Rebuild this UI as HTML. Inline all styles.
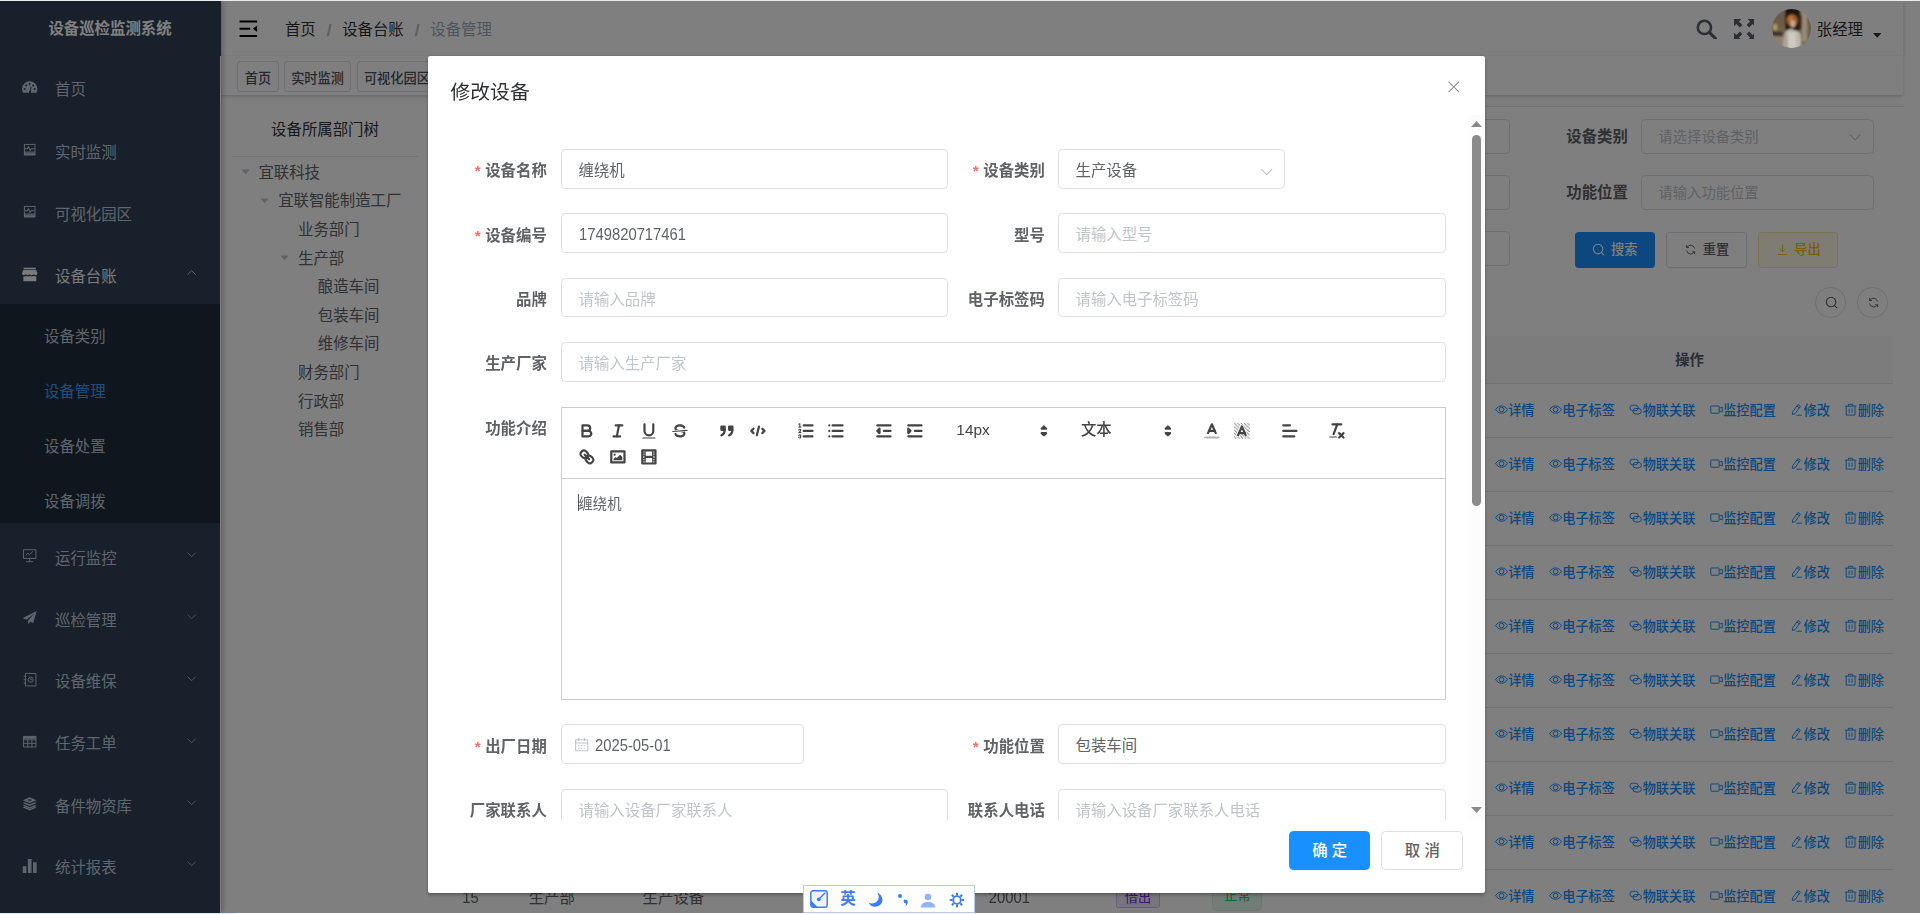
<!DOCTYPE html>
<html lang="zh-CN"><head><meta charset="utf-8"><title>设备巡检监测系统</title>
<style>
*{box-sizing:border-box}
html,body{margin:0;padding:0}
body{width:1920px;height:914px;overflow:hidden;position:relative;background:#ededeb;
 font-family:"Liberation Sans","Noto Sans CJK SC",sans-serif;font-size:14px;color:#606266;
 -webkit-font-smoothing:antialiased}
#vp{position:absolute;left:0;top:1px;width:1920px;height:912px;overflow:hidden;background:#fff}
.botline{position:absolute;left:0;top:913px;width:1920px;height:1px;background:#fff}
.botline:before{content:"";position:absolute;left:0;top:0;width:236px;height:1px;background:#d9f0f8}
#z{zoom:1.1;z-index:0;position:absolute;left:0;top:0;width:1745.46px;height:829.1px;overflow:hidden}
#app{position:absolute;left:0;top:0;width:1730px;height:829.1px;background:#fff}
.v-modal{position:absolute;left:0;top:0;width:100%;height:100%;background:#000;opacity:.5;z-index:10}
.dlg{z-index:11}
.dh,.db{opacity:.999}
svg{display:block}
/* ---------- sidebar ---------- */
.sidebar{position:absolute;left:0;top:0;width:200px;height:100%;background:#304156;box-shadow:2px 0 6px rgba(0,21,41,.35);z-index:5;overflow:hidden}
.logo{height:50px;line-height:50px;text-align:center;color:#fff;font-weight:700;font-size:14px;white-space:nowrap}
.menu{position:absolute;left:0;top:0;width:200px}
.mi{position:absolute;left:0;width:200px;height:56px;line-height:56px;padding-left:20px;color:#bfcbd9;font-size:14px;white-space:nowrap}
.mi .ic{position:absolute;left:20px;top:18.8px;width:14px;height:14px}
.mi .ic svg{width:14px;height:14px}
.mi .tx{position:absolute;left:50px;top:0}
.mi.act{color:#f4f4f5}
.mi .arr{position:absolute;right:19.5px;top:18.3px;width:12px;height:12px}
.sub{position:absolute;left:0;width:200px;background:#1f2d3d}
.smi{position:absolute;left:0;width:200px;height:50px;line-height:50px;padding-left:40px;color:#bfcbd9;font-size:14px}
.smi.on{color:#409eff}
/* ---------- main ---------- */
.main{position:absolute;left:200px;top:0;width:1530px;height:100%;background:#fff}
.navbar{position:absolute;left:0;top:0;width:100%;height:50px;background:#fff;box-shadow:0 1px 4px rgba(0,21,41,.22)}
.hamb{position:absolute;left:15px;top:15px;width:20px;height:20px}
.bc{position:absolute;left:59px;top:1.2px;line-height:50px;font-size:14px;color:#303133;white-space:nowrap}
.bc .sep{margin:0 10.1px;display:inline-block;transform:scale(1.25,1.12);color:#c0c4cc;font-weight:700}
.bc .last{color:#97a8be}
.nr{position:absolute;top:0;height:50px}
.tags{position:absolute;left:0;top:50px;width:100%;height:36.3px;background:#fff;border-bottom:1px solid #d8dce5;box-shadow:0 1px 3px 0 rgba(0,0,0,.12),0 0 3px 0 rgba(0,0,0,.04);white-space:nowrap;overflow:hidden}
.tag{display:inline-block;vertical-align:top;height:28px;line-height:26px;border:1px solid #d8dce5;border-radius:3px;color:#495060;background:#fff;padding:2.5px 5.8px 0;font-size:12px;font-weight:500;margin-left:4.8px;margin-top:4.5px}
.tag:first-child{margin-left:15.8px}
.abs{position:absolute}
.tree-title{position:absolute;text-align:center;font-size:14px;color:#303133;white-space:nowrap}
.tn{position:absolute;height:26px;line-height:26px;padding-top:.9px;font-size:14px;color:#606266;white-space:nowrap}
.tn i{position:absolute;left:-18px;top:7px;width:12px;height:12px}
.lbl{position:absolute;font-size:14px;font-weight:700;color:#606266;white-space:nowrap;line-height:32px;text-align:right}
.inp{position:absolute;height:32px;border:1px solid #dcdfe6;border-radius:4px;background:#fff;font-size:13px;color:#c0c4cc;line-height:30px;padding:1px 0 0 15px;white-space:nowrap}
.btn{position:absolute;height:32.5px;border-radius:3px;font-size:12px;font-weight:500;line-height:30px;white-space:nowrap;text-align:center;border:1px solid #dcdfe6;color:#606266;background:#fff}
.btn svg{display:inline-block;vertical-align:-1.5px;width:12px;height:12px;margin-right:5px}
.btn.pri{background:#1890ff;border-color:#1890ff;color:#fff}
.btn.warn{background:#fff8e6;border-color:#ffe399;color:#ffba00}
.cbtn{position:absolute;width:28px;height:28px;border-radius:50%;border:1px solid #dcdfe6;background:#fff}
.cbtn svg{position:absolute;left:7px;top:7px;width:12px;height:12px}
.th{position:absolute;background:#f8f8f9;border-bottom:1px solid #dfe6ec}
.thx{position:absolute;font-size:13px;font-weight:700;color:#515a6e;white-space:nowrap;line-height:20px;text-align:center}
.row{position:absolute;border-bottom:1px solid #dfe6ec}
.ops{position:absolute;white-space:nowrap;font-size:12px;font-weight:500;color:#1890ff;line-height:20px;text-align:center;padding-top:.9px}
.ops span{display:inline-block;margin-left:13.2px}
.ops span:first-child{margin-left:0}
.ops svg{display:inline-block;width:12px;height:12px;vertical-align:-1.5px;margin-right:0}
.cell{position:absolute;font-size:14px;color:#606266;white-space:nowrap;line-height:23px;text-align:center}
.etag{position:absolute;height:24px;line-height:22px;font-size:12px;border-radius:4px;border:1px solid;text-align:center;white-space:nowrap}
/* ---------- dialog ---------- */
.dlg{position:absolute;left:389.09px;top:50px;width:961px;height:760.9px;background:#fff;border-radius:2px;box-shadow:0 1px 3px rgba(0,0,0,.3);color:#606266}
.dh{position:absolute;left:20.5px;top:20.9px;font-size:18px;line-height:24px;color:#303133;white-space:nowrap}
.dx{position:absolute;right:20px;top:20px;width:16px;height:16px}
.db{position:absolute;left:0;top:54px;width:961px;height:641px;overflow:hidden}
.form{position:absolute;left:20px;top:30.5px;width:905.5px}
.fr{position:relative;height:36px;margin-bottom:22.6px}
.fl{position:absolute;top:0;height:36px;line-height:36px;width:100px;padding-right:12px;text-align:right;font-size:14px;font-weight:700;color:#606266;white-space:nowrap;padding-top:2px}
.fl.req:before{content:"*";color:#f56c6c;margin-right:4px;font-weight:700}
.fi{position:absolute;top:0;height:36px;border:1px solid #dcdfe6;border-radius:4px;background:#fff;padding:1.9px 15px 0;font-size:14px;line-height:34px;color:#606266;white-space:nowrap}
.fi.ph{color:#c0c4cc}
.c1l{left:0}.c1i{left:101px;width:351.75px}
.c2l{left:452.75px}.c2i{left:552.75px;width:352.75px}
.qt{position:absolute;left:101px;top:0;width:804.5px;height:66px;border:1px solid #ccc;padding:8.8px 8px 8px 8.9px;font-family:"Liberation Sans","Noto Sans CJK SC",sans-serif}
.qt:after{content:"";display:block;clear:both}
.qf{float:left;margin-right:15.25px;height:24px}
.qb{float:left;width:28px;height:24px;padding:3px 5px}
.qb svg{width:18px;height:18px}
.qs{fill:none;stroke:#444;stroke-linecap:round;stroke-linejoin:round;stroke-width:2}
.qfl{fill:#444}
.qthin{stroke-width:1}
.qpk{float:left;position:relative;width:98px;height:24px;line-height:24px;font-size:14px;font-weight:500;color:#444;padding-left:8.6px;white-space:nowrap}
.qpk svg{position:absolute;right:1.2px;top:3px;width:18px;height:18px}
.qc{position:absolute;left:101px;top:66px;width:804.5px;height:201px;border:1px solid #ccc;border-top:0;padding:12.9px 15px 12px;font-size:13px;line-height:18.46px;color:#606266}
.caret{position:absolute;left:14.1px;top:13.6px;width:.95px;height:15.200px;background:#55575c}
.sbar{position:absolute;right:.9px;top:54px;width:14.4px;height:641px;background:#fcfcfc}
.sthumb{position:absolute;left:3.600px;width:8.200px;border-radius:4.100px;background:#8b8b8b}
.df{position:absolute;right:20px;bottom:21.2px;height:35px;white-space:nowrap}
.dbtn{display:inline-block;vertical-align:top;height:35px;line-height:33px;padding:.6px 0 0;width:74.2px;text-align:center;font-weight:500;font-size:14px;border-radius:4px;border:1px solid #dcdfe6;color:#606266;background:#fff;margin-left:10px}
.dbtn.pri{background:#1890ff;border-color:#1890ff;color:#fff}
.ime{z-index:3;position:absolute;left:803px;top:884px;width:172px;height:28.400px;background:#fff;border:1px solid #b9c8ee;box-sizing:border-box}
.avatar{position:absolute;z-index:11;border-radius:50%;overflow:hidden}
.sb-edge1{position:absolute;left:200px;top:0;width:.95px;height:50px;background:#304156;z-index:6}
.sb-edge2{position:absolute;left:200px;top:50px;width:.95px;height:800px;background:#fff;z-index:6}
.num{display:inline-block;transform:scale(.962,1.03);transform-origin:0 70%}
.numc{display:inline-block;transform:scale(.962,1.03);transform-origin:50% 70%}

</style></head>
<body>
<div id="vp">
<div id="z">
<div id="app">
<div class="sidebar">
 <div class="logo">设备巡检监测系统</div>
 <div class="menu">
  <div style="top:53.09px" class="mi"><span class="ic"><svg viewBox="0 0 16 16" style="overflow:visible"><g transform="translate(8 8) scale(1.09) translate(-8 -8.300)"><path fill="#bfcbd9" d="M8 2.2A7.3 7.3 0 0 0 .7 9.5c0 1.3.35 2.6 1 3.7h12.6c.65-1.1 1-2.4 1-3.7A7.3 7.3 0 0 0 8 2.2z"/><g fill="#304156"><circle cx="3.3" cy="9.6" r="1"/><circle cx="4.7" cy="6.2" r="1"/><circle cx="8" cy="4.8" r="1"/><circle cx="11.3" cy="6.2" r="1"/><circle cx="12.7" cy="9.6" r="1"/><path d="M7.2 12.2a1.1 1.1 0 1 0 1.9-.7l.7-4.2h-.9l-.9 4.1c-.4.1-.7.4-.8.8z"/></g></g></svg></span><span class="tx">首页</span></div>
  <div style="top:109.55px" class="mi"><span class="ic"><svg viewBox="0 0 16 16"><path fill="#bfcbd9" d="M2 2h12v12H2z"/><path fill="#304156" d="M3 3h10v7H3z"/><path fill="none" stroke="#bfcbd9" stroke-width="1.1" d="M3 7h2.6l1.1-2 1.8 3.6 1.2-1.6H13"/><path fill="#304156" d="M3 10.9h10v.8H3z" opacity=".6"/></svg></span><span class="tx">实时监测</span></div>
  <div style="top:166.09px" class="mi"><span class="ic"><svg viewBox="0 0 16 16"><path fill="#bfcbd9" d="M2 2h12v12H2z"/><path fill="#304156" d="M3 3h10v7H3z"/><path fill="none" stroke="#bfcbd9" stroke-width="1.1" d="M3 7h2.6l1.1-2 1.8 3.6 1.2-1.6H13"/><path fill="#304156" d="M3 10.9h10v.8H3z" opacity=".6"/></svg></span><span class="tx">可视化园区</span></div>
  <div style="top:222.64px" class="mi act"><span class="ic"><svg viewBox="0 0 16 16" style="overflow:visible"><g fill="#f4f4f5" transform="translate(8 8) scale(1.1) translate(-8 -8.200)"><path d="M2.2 1.6h11.6v1.5H2.2z"/><path d="M1.9 3.8h12.2l1.2 3.1c0 1.1-.9 1.8-1.9 1.8-.8 0-1.5-.5-1.8-1.1-.3.6-1 1.1-1.8 1.1S8.300 8.200 8 7.600c-.3.6-1 1.100-1.800 1.100s-1.500-.5-1.800-1.100c-.3.6-1 1.100-1.800 1.100-1 0-1.900-.7-1.900-1.800z"/><path d="M2 9.700c.3.100.500.100.800.100.700 0 1.300-.2 1.800-.6.500.4 1.100.6 1.800.6s1.300-.2 1.800-.6c.5.400 1.100.600 1.800.600s1.300-.2 1.800-.6c.5.400 1.100.600 1.800.600.300 0 .400 0 .600-.1V14.400H2z"/></g></svg></span><span class="tx">设备台账</span>
    <span class="arr"><svg viewBox="0 0 12 12"><path d="M2.300 7.900 6 4.200l3.700 3.700" fill="none" stroke="#f4f4f5" stroke-width=".9" opacity=".75"/></svg></span></div>
  <div class="sub" style="top:275.27px;height:199.64px"></div>
   <div style="top:280.09px" class="smi">设备类别</div>
   <div style="top:330.27px" class="smi on">设备管理</div>
   <div style="top:380.36px" class="smi">设备处置</div>
   <div style="top:430.0px" class="smi">设备调拨</div>
  <div style="top:478.64px" class="mi"><span class="ic"><svg viewBox="0 0 16 16"><g fill="none" stroke="#bfcbd9" stroke-width="1"><path d="M1.500 1.800h13v9h-13z"/><path d="M8 10.800v3M4.500 14.200h7"/><path d="M4 7.600l2-2.300 1.800 1.700 3.500-3.400"/></g></svg></span><span class="tx">运行监控</span><span class="arr"><svg viewBox="0 0 12 12"><path d="M2.300 4.200 6 7.900l3.700-3.700" fill="none" stroke="#bfcbd9" stroke-width=".9" opacity=".75"/></svg></span></div>
  <div style="top:535.0px" class="mi"><span class="ic"><svg viewBox="0 0 16 16"><path fill="#bfcbd9" d="M15.300 1 .8 8.200l3.900 1.900L13 3.300 6.400 11v3.900l2.400-2.700 2.900 1.400z"/></svg></span><span class="tx">巡检管理</span><span class="arr"><svg viewBox="0 0 12 12"><path d="M2.300 4.200 6 7.900l3.700-3.700" fill="none" stroke="#bfcbd9" stroke-width=".9" opacity=".75"/></svg></span></div>
  <div style="top:591.36px" class="mi"><span class="ic"><svg viewBox="0 0 16 16"><g fill="none" stroke="#bfcbd9" stroke-width="1"><path d="M3.500 1.500h11v13h-11z"/><circle cx="9" cy="8" r="2.600"/><path d="M9 6.600V8h1.200M1.800 4.500h2.600M1.800 8h2.600M1.800 11.500h2.600"/></g></svg></span><span class="tx">设备维保</span><span class="arr"><svg viewBox="0 0 12 12"><path d="M2.300 4.200 6 7.900l3.700-3.700" fill="none" stroke="#bfcbd9" stroke-width=".9" opacity=".75"/></svg></span></div>
  <div style="top:647.64px" class="mi"><span class="ic"><svg viewBox="0 0 16 16"><g fill="none" stroke="#bfcbd9" stroke-width="1"><path d="M1.500 2.500h13v11h-13z"/><path d="M1.500 6h13M1.500 9.700h13M6 6v7.500M10.300 6v7.500"/></g><path fill="#bfcbd9" d="M1.500 2.500h13V5h-13z"/></svg></span><span class="tx">任务工单</span><span class="arr"><svg viewBox="0 0 12 12"><path d="M2.300 4.200 6 7.900l3.700-3.700" fill="none" stroke="#bfcbd9" stroke-width=".9" opacity=".75"/></svg></span></div>
  <div style="top:704.18px" class="mi"><span class="ic"><svg viewBox="0 0 16 16"><g fill="#bfcbd9"><path d="M8 1.200 15.200 4.300 8 7.400.8 4.300z"/><path d="M8 8.700 2.600 6.400.8 7.200 8 10.300l7.200-3.100-1.800-.8z"/><path d="M8 11.600 2.600 9.300.8 10.100 8 13.200l7.200-3.100-1.800-.8z"/><path d="M8 14.500 2.600 12.200.8 13 8 16.100l7.200-3.100-1.800-.8z" transform="translate(0 -1)"/></g><path fill="#304156" d="M6.200 3.600h3.600v1.300H6.200z"/></svg></span><span class="tx">备件物资库</span><span class="arr"><svg viewBox="0 0 12 12"><path d="M2.300 4.200 6 7.900l3.700-3.700" fill="none" stroke="#bfcbd9" stroke-width=".9" opacity=".75"/></svg></span></div>
  <div style="top:759.91px" class="mi"><span class="ic"><svg viewBox="0 0 16 16"><g fill="#bfcbd9"><path d="M.8 8.500h3.700v7H.8zM6.100 1h3.800v14.500H6.100zM11.500 4.500h3.700v11h-3.700z"/></g></svg></span><span class="tx">统计报表</span><span class="arr"><svg viewBox="0 0 12 12"><path d="M2.300 4.200 6 7.900l3.700-3.700" fill="none" stroke="#bfcbd9" stroke-width=".9" opacity=".75"/></svg></span></div>
 </div>
</div>

<div class="sb-edge1"></div><div class="sb-edge2"></div>

<div class="main">
<div class="navbar">
<svg class="hamb" viewBox="0 0 20 20"><path fill="#000" d="M2.300 2.300h16v1.800h-16zM2.300 8.900h9.700v1.800H2.300zM2.300 15.400h16v1.800h-16zM18.300 6.800v6l-3.800-3z"/></svg>
<div class="bc">首页<span class="sep">/</span>设备台账<span class="sep">/</span><span class="last">设备管理</span></div>
<svg class="abs" style="left:1342.27px;top:15.91px;width:19.09px;height:19.09px" viewBox="0 0 20 20"><circle cx="8" cy="8" r="6.300" fill="none" stroke="#5a5e66" stroke-width="2.500"/><path d="M12.700 12.700 18.600 18.600" stroke="#5a5e66" stroke-width="3" stroke-linecap="round"/></svg>
<svg class="abs" style="left:1375.91px;top:15.91px;width:19.09px;height:19.09px" viewBox="0 0 20 20"><g fill="#5a5e66"><path d="M0 0h7L4.700 2.300 8 5.600 5.600 8 2.300 4.700 0 7zM20 0v7l-2.300-2.300L14.400 8 12 5.600l3.300-3.300L13 0zM0 20v-7l2.300 2.300L5.600 12 8 14.400l-3.300 3.300L7 20zM20 20h-7l2.300-2.300L12 14.400l2.400-2.400 3.300 3.300L20 13z"/></g></svg>
<div class="abs" style="left:1451.64px;top:1.2px;line-height:50px;font-size:14px;color:#303133;white-space:nowrap">张经理</div>
<svg class="abs" style="left:1503.18px;top:29.09px;width:7.64px;height:4.36px" viewBox="0 0 8 4.500"><path d="M0 0h8L4 4.500z" fill="#303133"/></svg>
</div>
<div class="tags"><span class="tag">首页</span><span class="tag">实时监测</span><span class="tag">可视化园区</span><span class="tag">设备类别</span></div>
<div class="tree-title" style="left:10.91px;top:103.27px;width:169.09px;line-height:28px">设备所属部门树</div>
<div class="abs" style="left:10.91px;top:140.91px;width:169.09px;height:1px;background:#e6e6e6"></div>
<div class="tn" style="left:34.91px;top:142.55px"><i><svg viewBox="0 0 12 12" width="12" height="12"><path d="M2.200 4.100h7.600L6 8.500z" fill="#c0c4cc"/></svg></i>宜联科技</div>
<div class="tn" style="left:52.91px;top:168.55px"><i><svg viewBox="0 0 12 12" width="12" height="12"><path d="M2.200 4.100h7.600L6 8.500z" fill="#c0c4cc"/></svg></i>宜联智能制造工厂</div>
<div class="tn" style="left:70.91px;top:194.55px">业务部门</div>
<div class="tn" style="left:70.91px;top:220.55px"><i><svg viewBox="0 0 12 12" width="12" height="12"><path d="M2.200 4.100h7.600L6 8.500z" fill="#c0c4cc"/></svg></i>生产部</div>
<div class="tn" style="left:88.91px;top:246.55px">酿造车间</div>
<div class="tn" style="left:88.91px;top:272.55px">包装车间</div>
<div class="tn" style="left:88.91px;top:298.55px">维修车间</div>
<div class="tn" style="left:70.91px;top:324.55px">财务部门</div>
<div class="tn" style="left:70.91px;top:350.55px">行政部</div>
<div class="tn" style="left:70.91px;top:376.55px">销售部</div>
<div class="abs" style="left:981.82px;top:92.73px;width:549.09px;height:3.27px;background:linear-gradient(rgba(0,0,0,0),rgba(0,0,0,.045));border-bottom:1px solid #e4e6ea"></div>
<div class="inp" style="left:961.82px;top:107.45px;width:211.27px"></div>
<div class="inp" style="left:961.82px;top:158.36px;width:211.27px"></div>
<div class="inp" style="left:961.82px;top:209.27px;width:211.27px"></div>
<div class="lbl" style="left:1200.0px;top:107.45px;width:79.91px">设备类别</div>
<div class="inp" style="left:1291.82px;top:107.45px;width:211.45px">请选择设备类别<svg class="abs" style="right:9px;top:9px;width:13px;height:13px" viewBox="0 0 13 13"><path d="M1.800 4.300 6.500 9l4.700-4.700" fill="none" stroke="#c0c4cc" stroke-width="1"/></svg></div>
<div class="lbl" style="left:1200.0px;top:158.36px;width:79.91px">功能位置</div>
<div class="inp" style="left:1291.82px;top:158.36px;width:211.45px">请输入功能位置</div>
<div class="btn pri" style="left:1231.82px;top:210.18px;width:72.55px"><svg viewBox="0 0 12 12"><circle cx="5.500" cy="5.500" r="4.300" fill="none" stroke="currentColor" stroke-width="1"/><path d="M8.700 8.700 10.800 10.800" stroke="currentColor" stroke-width="1" stroke-linecap="round"/></svg>搜索</div>
<div class="btn" style="left:1314.55px;top:210.18px;width:74.0px"><svg viewBox="0 0 12 12"><g fill="none" stroke="currentColor" stroke-width=".85" stroke-linecap="round" transform="translate(12 0) scale(-1 1)"><path d="M2.400 4.700A3.900 3.900 0 0 1 9.500 3.900M9.600 7.300A3.900 3.900 0 0 1 2.500 8.100"/><path d="M9.700 2.100v1.900H7.800M2.300 9.900V8h1.900"/></g></svg>重置</div>
<div class="btn warn" style="left:1398.18px;top:210.18px;width:72.91px"><svg viewBox="0 0 12 12"><g fill="none" stroke="currentColor" stroke-width=".85"><path d="M6 1.300v6.600M3.200 5.200 6 8l2.800-2.800M1.800 10.500h8.400"/></g></svg>导出</div>
<div class="cbtn" style="left:1450.18px;top:260.18px;width:27.64px;height:27.64px;color:#606266"><svg style='left:8.09px;top:6.91px' viewBox="0 0 12 12"><circle cx="5.500" cy="5.500" r="4.300" fill="none" stroke="currentColor" stroke-width="1"/><path d="M8.700 8.700 10.800 10.800" stroke="currentColor" stroke-width="1" stroke-linecap="round"/></svg></div>
<div class="cbtn" style="left:1488.45px;top:260.18px;width:27.64px;height:27.64px;color:#606266"><svg style='left:8.09px;top:6.91px' viewBox="0 0 12 12"><g fill="none" stroke="currentColor" stroke-width=".85" stroke-linecap="round" transform="translate(12 0) scale(-1 1)"><path d="M2.400 4.700A3.900 3.900 0 0 1 9.500 3.900M9.600 7.300A3.900 3.900 0 0 1 2.500 8.100"/><path d="M9.700 2.100v1.900H7.800M2.300 9.900V8h1.900"/></g></svg></div>
<div class="th" style="left:192.73px;top:304.55px;width:1328.18px;height:43.45px"></div>
<div class="thx" style="left:1150.91px;top:315.91px;width:370.0px">操作</div>
<div class="row" style="left:192.73px;top:348.0px;width:1328.18px;height:49.09px"></div>
<div class="ops" style="left:1150.91px;top:361.82px;width:370.0px"><span><svg viewBox="0 0 12 12"><g fill="none" stroke="currentColor" stroke-width=".9"><path d="M.6 6C2 3.700 3.900 2.700 6 2.700S10 3.700 11.400 6C10 8.300 8.100 9.300 6 9.300S2 8.300.6 6z"/><circle cx="6" cy="6" r="2.100"/></g></svg>详情</span><span><svg viewBox="0 0 12 12"><g fill="none" stroke="currentColor" stroke-width=".9"><path d="M.6 6C2 3.700 3.900 2.700 6 2.700S10 3.700 11.400 6C10 8.300 8.100 9.300 6 9.300S2 8.300.6 6z"/><circle cx="6" cy="6" r="2.100"/></g></svg>电子标签</span><span><svg viewBox="0 0 12 12"><g fill="none" stroke="currentColor" stroke-width=".9"><rect x=".8" y="2" width="7.600" height="5" rx="2.500"/><rect x="3.600" y="5" width="7.600" height="5" rx="2.500"/></g></svg>物联关联</span><span><svg viewBox="0 0 12 12"><g fill="none" stroke="currentColor" stroke-width=".9"><rect x=".7" y="2.700" width="7.600" height="6.600" rx=".5"/><path d="M8.700 4.700 11.200 3.900v4.200L8.700 7.300"/></g></svg>监控配置</span><span><svg viewBox="0 0 12 12"><g fill="none" stroke="currentColor" stroke-width=".9"><path d="M7.300 1.300 9.500 2.800 4.600 9.700 2.100 10.600 2.400 8.100zM6.300 2.700 8.500 4.200"/><path d="M5.800 11.100h5"/></g></svg>修改</span><span><svg viewBox="0 0 12 12"><g fill="none" stroke="currentColor" stroke-width=".9"><path d="M.8 2.900h10.400M4 2.700V1.200h4v1.500M2 3v8h8V3M4.700 5v4M7.300 5v4"/></g></svg>删除</span></div>
<div class="row" style="left:192.73px;top:397.09px;width:1328.18px;height:49.09px"></div>
<div class="ops" style="left:1150.91px;top:410.91px;width:370.0px"><span><svg viewBox="0 0 12 12"><g fill="none" stroke="currentColor" stroke-width=".9"><path d="M.6 6C2 3.700 3.900 2.700 6 2.700S10 3.700 11.400 6C10 8.300 8.100 9.300 6 9.300S2 8.300.6 6z"/><circle cx="6" cy="6" r="2.100"/></g></svg>详情</span><span><svg viewBox="0 0 12 12"><g fill="none" stroke="currentColor" stroke-width=".9"><path d="M.6 6C2 3.700 3.900 2.700 6 2.700S10 3.700 11.400 6C10 8.300 8.100 9.300 6 9.300S2 8.300.6 6z"/><circle cx="6" cy="6" r="2.100"/></g></svg>电子标签</span><span><svg viewBox="0 0 12 12"><g fill="none" stroke="currentColor" stroke-width=".9"><rect x=".8" y="2" width="7.600" height="5" rx="2.500"/><rect x="3.600" y="5" width="7.600" height="5" rx="2.500"/></g></svg>物联关联</span><span><svg viewBox="0 0 12 12"><g fill="none" stroke="currentColor" stroke-width=".9"><rect x=".7" y="2.700" width="7.600" height="6.600" rx=".5"/><path d="M8.700 4.700 11.200 3.900v4.200L8.700 7.300"/></g></svg>监控配置</span><span><svg viewBox="0 0 12 12"><g fill="none" stroke="currentColor" stroke-width=".9"><path d="M7.300 1.300 9.500 2.800 4.600 9.700 2.100 10.600 2.400 8.100zM6.300 2.700 8.500 4.200"/><path d="M5.800 11.100h5"/></g></svg>修改</span><span><svg viewBox="0 0 12 12"><g fill="none" stroke="currentColor" stroke-width=".9"><path d="M.8 2.900h10.400M4 2.700V1.200h4v1.500M2 3v8h8V3M4.700 5v4M7.300 5v4"/></g></svg>删除</span></div>
<div class="row" style="left:192.73px;top:446.18px;width:1328.18px;height:49.09px"></div>
<div class="ops" style="left:1150.91px;top:460.0px;width:370.0px"><span><svg viewBox="0 0 12 12"><g fill="none" stroke="currentColor" stroke-width=".9"><path d="M.6 6C2 3.700 3.900 2.700 6 2.700S10 3.700 11.400 6C10 8.300 8.100 9.300 6 9.300S2 8.300.6 6z"/><circle cx="6" cy="6" r="2.100"/></g></svg>详情</span><span><svg viewBox="0 0 12 12"><g fill="none" stroke="currentColor" stroke-width=".9"><path d="M.6 6C2 3.700 3.900 2.700 6 2.700S10 3.700 11.400 6C10 8.300 8.100 9.300 6 9.300S2 8.300.6 6z"/><circle cx="6" cy="6" r="2.100"/></g></svg>电子标签</span><span><svg viewBox="0 0 12 12"><g fill="none" stroke="currentColor" stroke-width=".9"><rect x=".8" y="2" width="7.600" height="5" rx="2.500"/><rect x="3.600" y="5" width="7.600" height="5" rx="2.500"/></g></svg>物联关联</span><span><svg viewBox="0 0 12 12"><g fill="none" stroke="currentColor" stroke-width=".9"><rect x=".7" y="2.700" width="7.600" height="6.600" rx=".5"/><path d="M8.700 4.700 11.200 3.900v4.200L8.700 7.300"/></g></svg>监控配置</span><span><svg viewBox="0 0 12 12"><g fill="none" stroke="currentColor" stroke-width=".9"><path d="M7.300 1.300 9.500 2.800 4.600 9.700 2.100 10.600 2.400 8.100zM6.300 2.700 8.500 4.200"/><path d="M5.800 11.100h5"/></g></svg>修改</span><span><svg viewBox="0 0 12 12"><g fill="none" stroke="currentColor" stroke-width=".9"><path d="M.8 2.900h10.400M4 2.700V1.200h4v1.500M2 3v8h8V3M4.700 5v4M7.300 5v4"/></g></svg>删除</span></div>
<div class="row" style="left:192.73px;top:495.27px;width:1328.18px;height:49.09px"></div>
<div class="ops" style="left:1150.91px;top:509.09px;width:370.0px"><span><svg viewBox="0 0 12 12"><g fill="none" stroke="currentColor" stroke-width=".9"><path d="M.6 6C2 3.700 3.900 2.700 6 2.700S10 3.700 11.400 6C10 8.300 8.100 9.300 6 9.300S2 8.300.6 6z"/><circle cx="6" cy="6" r="2.100"/></g></svg>详情</span><span><svg viewBox="0 0 12 12"><g fill="none" stroke="currentColor" stroke-width=".9"><path d="M.6 6C2 3.700 3.900 2.700 6 2.700S10 3.700 11.400 6C10 8.300 8.100 9.300 6 9.300S2 8.300.6 6z"/><circle cx="6" cy="6" r="2.100"/></g></svg>电子标签</span><span><svg viewBox="0 0 12 12"><g fill="none" stroke="currentColor" stroke-width=".9"><rect x=".8" y="2" width="7.600" height="5" rx="2.500"/><rect x="3.600" y="5" width="7.600" height="5" rx="2.500"/></g></svg>物联关联</span><span><svg viewBox="0 0 12 12"><g fill="none" stroke="currentColor" stroke-width=".9"><rect x=".7" y="2.700" width="7.600" height="6.600" rx=".5"/><path d="M8.700 4.700 11.200 3.900v4.200L8.700 7.300"/></g></svg>监控配置</span><span><svg viewBox="0 0 12 12"><g fill="none" stroke="currentColor" stroke-width=".9"><path d="M7.300 1.300 9.500 2.800 4.600 9.700 2.100 10.600 2.400 8.100zM6.300 2.700 8.500 4.200"/><path d="M5.800 11.100h5"/></g></svg>修改</span><span><svg viewBox="0 0 12 12"><g fill="none" stroke="currentColor" stroke-width=".9"><path d="M.8 2.900h10.400M4 2.700V1.200h4v1.500M2 3v8h8V3M4.700 5v4M7.300 5v4"/></g></svg>删除</span></div>
<div class="row" style="left:192.73px;top:544.36px;width:1328.18px;height:49.09px"></div>
<div class="ops" style="left:1150.91px;top:558.18px;width:370.0px"><span><svg viewBox="0 0 12 12"><g fill="none" stroke="currentColor" stroke-width=".9"><path d="M.6 6C2 3.700 3.900 2.700 6 2.700S10 3.700 11.400 6C10 8.300 8.100 9.300 6 9.300S2 8.300.6 6z"/><circle cx="6" cy="6" r="2.100"/></g></svg>详情</span><span><svg viewBox="0 0 12 12"><g fill="none" stroke="currentColor" stroke-width=".9"><path d="M.6 6C2 3.700 3.900 2.700 6 2.700S10 3.700 11.400 6C10 8.300 8.100 9.300 6 9.300S2 8.300.6 6z"/><circle cx="6" cy="6" r="2.100"/></g></svg>电子标签</span><span><svg viewBox="0 0 12 12"><g fill="none" stroke="currentColor" stroke-width=".9"><rect x=".8" y="2" width="7.600" height="5" rx="2.500"/><rect x="3.600" y="5" width="7.600" height="5" rx="2.500"/></g></svg>物联关联</span><span><svg viewBox="0 0 12 12"><g fill="none" stroke="currentColor" stroke-width=".9"><rect x=".7" y="2.700" width="7.600" height="6.600" rx=".5"/><path d="M8.700 4.700 11.200 3.900v4.200L8.700 7.300"/></g></svg>监控配置</span><span><svg viewBox="0 0 12 12"><g fill="none" stroke="currentColor" stroke-width=".9"><path d="M7.300 1.300 9.500 2.800 4.600 9.700 2.100 10.600 2.400 8.100zM6.300 2.700 8.500 4.200"/><path d="M5.800 11.100h5"/></g></svg>修改</span><span><svg viewBox="0 0 12 12"><g fill="none" stroke="currentColor" stroke-width=".9"><path d="M.8 2.900h10.400M4 2.700V1.200h4v1.500M2 3v8h8V3M4.700 5v4M7.300 5v4"/></g></svg>删除</span></div>
<div class="row" style="left:192.73px;top:593.45px;width:1328.18px;height:49.09px"></div>
<div class="ops" style="left:1150.91px;top:607.27px;width:370.0px"><span><svg viewBox="0 0 12 12"><g fill="none" stroke="currentColor" stroke-width=".9"><path d="M.6 6C2 3.700 3.900 2.700 6 2.700S10 3.700 11.400 6C10 8.300 8.100 9.300 6 9.300S2 8.300.6 6z"/><circle cx="6" cy="6" r="2.100"/></g></svg>详情</span><span><svg viewBox="0 0 12 12"><g fill="none" stroke="currentColor" stroke-width=".9"><path d="M.6 6C2 3.700 3.900 2.700 6 2.700S10 3.700 11.400 6C10 8.300 8.100 9.300 6 9.300S2 8.300.6 6z"/><circle cx="6" cy="6" r="2.100"/></g></svg>电子标签</span><span><svg viewBox="0 0 12 12"><g fill="none" stroke="currentColor" stroke-width=".9"><rect x=".8" y="2" width="7.600" height="5" rx="2.500"/><rect x="3.600" y="5" width="7.600" height="5" rx="2.500"/></g></svg>物联关联</span><span><svg viewBox="0 0 12 12"><g fill="none" stroke="currentColor" stroke-width=".9"><rect x=".7" y="2.700" width="7.600" height="6.600" rx=".5"/><path d="M8.700 4.700 11.200 3.900v4.200L8.700 7.300"/></g></svg>监控配置</span><span><svg viewBox="0 0 12 12"><g fill="none" stroke="currentColor" stroke-width=".9"><path d="M7.300 1.300 9.500 2.800 4.600 9.700 2.100 10.600 2.400 8.100zM6.300 2.700 8.500 4.200"/><path d="M5.800 11.100h5"/></g></svg>修改</span><span><svg viewBox="0 0 12 12"><g fill="none" stroke="currentColor" stroke-width=".9"><path d="M.8 2.900h10.400M4 2.700V1.200h4v1.500M2 3v8h8V3M4.700 5v4M7.300 5v4"/></g></svg>删除</span></div>
<div class="row" style="left:192.73px;top:642.55px;width:1328.18px;height:49.09px"></div>
<div class="ops" style="left:1150.91px;top:656.36px;width:370.0px"><span><svg viewBox="0 0 12 12"><g fill="none" stroke="currentColor" stroke-width=".9"><path d="M.6 6C2 3.700 3.900 2.700 6 2.700S10 3.700 11.400 6C10 8.300 8.100 9.300 6 9.300S2 8.300.6 6z"/><circle cx="6" cy="6" r="2.100"/></g></svg>详情</span><span><svg viewBox="0 0 12 12"><g fill="none" stroke="currentColor" stroke-width=".9"><path d="M.6 6C2 3.700 3.900 2.700 6 2.700S10 3.700 11.400 6C10 8.300 8.100 9.300 6 9.300S2 8.300.6 6z"/><circle cx="6" cy="6" r="2.100"/></g></svg>电子标签</span><span><svg viewBox="0 0 12 12"><g fill="none" stroke="currentColor" stroke-width=".9"><rect x=".8" y="2" width="7.600" height="5" rx="2.500"/><rect x="3.600" y="5" width="7.600" height="5" rx="2.500"/></g></svg>物联关联</span><span><svg viewBox="0 0 12 12"><g fill="none" stroke="currentColor" stroke-width=".9"><rect x=".7" y="2.700" width="7.600" height="6.600" rx=".5"/><path d="M8.700 4.700 11.200 3.900v4.200L8.700 7.300"/></g></svg>监控配置</span><span><svg viewBox="0 0 12 12"><g fill="none" stroke="currentColor" stroke-width=".9"><path d="M7.300 1.300 9.500 2.800 4.600 9.700 2.100 10.600 2.400 8.100zM6.300 2.700 8.500 4.200"/><path d="M5.800 11.100h5"/></g></svg>修改</span><span><svg viewBox="0 0 12 12"><g fill="none" stroke="currentColor" stroke-width=".9"><path d="M.8 2.900h10.400M4 2.700V1.200h4v1.500M2 3v8h8V3M4.700 5v4M7.300 5v4"/></g></svg>删除</span></div>
<div class="row" style="left:192.73px;top:691.64px;width:1328.18px;height:49.09px"></div>
<div class="ops" style="left:1150.91px;top:705.45px;width:370.0px"><span><svg viewBox="0 0 12 12"><g fill="none" stroke="currentColor" stroke-width=".9"><path d="M.6 6C2 3.700 3.900 2.700 6 2.700S10 3.700 11.400 6C10 8.300 8.100 9.300 6 9.300S2 8.300.6 6z"/><circle cx="6" cy="6" r="2.100"/></g></svg>详情</span><span><svg viewBox="0 0 12 12"><g fill="none" stroke="currentColor" stroke-width=".9"><path d="M.6 6C2 3.700 3.900 2.700 6 2.700S10 3.700 11.400 6C10 8.300 8.100 9.300 6 9.300S2 8.300.6 6z"/><circle cx="6" cy="6" r="2.100"/></g></svg>电子标签</span><span><svg viewBox="0 0 12 12"><g fill="none" stroke="currentColor" stroke-width=".9"><rect x=".8" y="2" width="7.600" height="5" rx="2.500"/><rect x="3.600" y="5" width="7.600" height="5" rx="2.500"/></g></svg>物联关联</span><span><svg viewBox="0 0 12 12"><g fill="none" stroke="currentColor" stroke-width=".9"><rect x=".7" y="2.700" width="7.600" height="6.600" rx=".5"/><path d="M8.700 4.700 11.200 3.900v4.200L8.700 7.300"/></g></svg>监控配置</span><span><svg viewBox="0 0 12 12"><g fill="none" stroke="currentColor" stroke-width=".9"><path d="M7.300 1.300 9.500 2.800 4.600 9.700 2.100 10.600 2.400 8.100zM6.300 2.700 8.500 4.200"/><path d="M5.800 11.100h5"/></g></svg>修改</span><span><svg viewBox="0 0 12 12"><g fill="none" stroke="currentColor" stroke-width=".9"><path d="M.8 2.900h10.400M4 2.700V1.200h4v1.500M2 3v8h8V3M4.700 5v4M7.300 5v4"/></g></svg>删除</span></div>
<div class="row" style="left:192.73px;top:740.73px;width:1328.18px;height:49.09px"></div>
<div class="ops" style="left:1150.91px;top:754.55px;width:370.0px"><span><svg viewBox="0 0 12 12"><g fill="none" stroke="currentColor" stroke-width=".9"><path d="M.6 6C2 3.700 3.900 2.700 6 2.700S10 3.700 11.400 6C10 8.300 8.100 9.300 6 9.300S2 8.300.6 6z"/><circle cx="6" cy="6" r="2.100"/></g></svg>详情</span><span><svg viewBox="0 0 12 12"><g fill="none" stroke="currentColor" stroke-width=".9"><path d="M.6 6C2 3.700 3.900 2.700 6 2.700S10 3.700 11.400 6C10 8.300 8.100 9.300 6 9.300S2 8.300.6 6z"/><circle cx="6" cy="6" r="2.100"/></g></svg>电子标签</span><span><svg viewBox="0 0 12 12"><g fill="none" stroke="currentColor" stroke-width=".9"><rect x=".8" y="2" width="7.600" height="5" rx="2.500"/><rect x="3.600" y="5" width="7.600" height="5" rx="2.500"/></g></svg>物联关联</span><span><svg viewBox="0 0 12 12"><g fill="none" stroke="currentColor" stroke-width=".9"><rect x=".7" y="2.700" width="7.600" height="6.600" rx=".5"/><path d="M8.700 4.700 11.200 3.900v4.200L8.700 7.300"/></g></svg>监控配置</span><span><svg viewBox="0 0 12 12"><g fill="none" stroke="currentColor" stroke-width=".9"><path d="M7.300 1.300 9.500 2.800 4.600 9.700 2.100 10.600 2.400 8.100zM6.300 2.700 8.500 4.200"/><path d="M5.800 11.100h5"/></g></svg>修改</span><span><svg viewBox="0 0 12 12"><g fill="none" stroke="currentColor" stroke-width=".9"><path d="M.8 2.900h10.400M4 2.700V1.200h4v1.500M2 3v8h8V3M4.700 5v4M7.300 5v4"/></g></svg>删除</span></div>
<div class="row" style="left:192.73px;top:789.82px;width:1328.18px;height:49.09px"></div>
<div class="ops" style="left:1150.91px;top:803.64px;width:370.0px"><span><svg viewBox="0 0 12 12"><g fill="none" stroke="currentColor" stroke-width=".9"><path d="M.6 6C2 3.700 3.900 2.700 6 2.700S10 3.700 11.400 6C10 8.300 8.100 9.300 6 9.300S2 8.300.6 6z"/><circle cx="6" cy="6" r="2.100"/></g></svg>详情</span><span><svg viewBox="0 0 12 12"><g fill="none" stroke="currentColor" stroke-width=".9"><path d="M.6 6C2 3.700 3.900 2.700 6 2.700S10 3.700 11.400 6C10 8.300 8.100 9.300 6 9.300S2 8.300.6 6z"/><circle cx="6" cy="6" r="2.100"/></g></svg>电子标签</span><span><svg viewBox="0 0 12 12"><g fill="none" stroke="currentColor" stroke-width=".9"><rect x=".8" y="2" width="7.600" height="5" rx="2.500"/><rect x="3.600" y="5" width="7.600" height="5" rx="2.500"/></g></svg>物联关联</span><span><svg viewBox="0 0 12 12"><g fill="none" stroke="currentColor" stroke-width=".9"><rect x=".7" y="2.700" width="7.600" height="6.600" rx=".5"/><path d="M8.700 4.700 11.200 3.900v4.200L8.700 7.300"/></g></svg>监控配置</span><span><svg viewBox="0 0 12 12"><g fill="none" stroke="currentColor" stroke-width=".9"><path d="M7.300 1.300 9.500 2.800 4.600 9.700 2.100 10.600 2.400 8.100zM6.300 2.700 8.500 4.200"/><path d="M5.800 11.100h5"/></g></svg>修改</span><span><svg viewBox="0 0 12 12"><g fill="none" stroke="currentColor" stroke-width=".9"><path d="M.8 2.900h10.400M4 2.700V1.200h4v1.500M2 3v8h8V3M4.700 5v4M7.300 5v4"/></g></svg>删除</span></div>
<div class="cell" style="left:172.91px;top:804.0px;width:109.09px"><span class="numc">15</span></div>
<div class="cell" style="left:247.09px;top:804.0px;width:109.09px">生产部</div>
<div class="cell" style="left:357.64px;top:804.0px;width:109.09px">生产设备</div>
<div class="cell" style="left:550.0px;top:804.0px;width:109.09px">缠绕机</div>
<div class="cell" style="left:663.09px;top:804.0px;width:109.09px"><span class="numc">20001</span></div>
<div class="etag" style="left:814.55px;top:802.73px;width:40.0px;height:21.82px;color:#722ed1;background:#f3eafc;border-color:#d3bdf3;line-height:23.18px;border-radius:2px">借出</div>
<div class="etag" style="left:902.27px;top:799.09px;width:45.45px;height:28.0px;color:#13ce66;background:#e7faf0;border-color:#d0f5e0;line-height:26.36px">正常</div>
</div>
</div>
<div class="v-modal"></div>
<div class="avatar" style="left:1610.82px;top:7.00px;width:35.73px;height:35.73px">
<svg viewBox="0 0 40 40" width="100%" height="100%"><defs><filter id="avb" x="-10%" y="-10%" width="120%" height="120%"><feGaussianBlur stdDeviation="0.9"/></filter><clipPath id="avc"><circle cx="20" cy="20" r="20"/></clipPath></defs>
<g clip-path="url(#avc)"><g filter="url(#avb)">
<rect x="-3" y="-3" width="46" height="46" fill="#74654f"/>
<path d="M-3 -3h17v20l-17 8z" fill="#6a5b47"/>
<rect x="13.500" y="-3" width="15" height="25" fill="#1c140d"/>
<rect x="27" y="6" width="4" height="14" fill="#3a2c1e"/>
<rect x="30.500" y="-3" width="5.500" height="36" fill="#978b78"/>
<rect x="36" y="-3" width="7" height="46" fill="#6b5e4c"/>
<rect x="1" y="15.500" width="4.500" height="6" fill="#b09a62"/>
<rect x="-3" y="23" width="14" height="4.500" fill="#3e3226"/>
<path d="M-3 28h17v15h-20z" fill="#8f806b"/>
<ellipse cx="20.500" cy="11.500" rx="5.700" ry="6.200" fill="#9a5a2c"/>
<ellipse cx="19" cy="10" rx="2.500" ry="3.500" fill="#b87440"/>
<ellipse cx="21.300" cy="15" rx="2.600" ry="3.800" fill="#c9a58c"/>
<path d="M11.500 43c-.6-8 0-16 2.500-20 2-2 4-2.600 6-2.800l3 1.600c3 .2 5.300 1.600 5.800 4 1 5 .8 11 .2 17z" fill="#beb8ad"/>
<path d="M16 23c2 2 5 2 7.500-.8l1.500 21h-9z" fill="#cfcac0"/>
<path d="M12 30c1-3 2-5 3.500-6.500l1 18h-5z" fill="#a9a297"/>
</g></g></svg></div>
<div class="dlg">
 <div class="dh">修改设备</div>
 <svg class="dx" viewBox="0 0 16 16"><path d="M3.200 3.200l9.600 9.600M12.800 3.200l-9.600 9.600" stroke="#909399" stroke-width="1" fill="none"/></svg>
 <div class="db">
  <div class="form">
   <div class="fr"><div class="fl req c1l">设备名称</div><div class="fi c1i">缠绕机</div>
     <div class="fl req c2l">设备类别</div><div class="fi" style="left:552.75px;width:206.400px">生产设备<svg class="abs" style="right:9px;top:12.500px;width:14px;height:14px" viewBox="0 0 14 14"><path d="M2 4.600 7 9.600l5-5" fill="none" stroke="#c0c4cc" stroke-width="1"/></svg></div></div>
   <div class="fr"><div class="fl req c1l">设备编号</div><div class="fi c1i"><span class="num">1749820717461</span></div>
     <div class="fl c2l">型号</div><div class="fi ph c2i">请输入型号</div></div>
   <div class="fr"><div class="fl c1l">品牌</div><div class="fi ph c1i">请输入品牌</div>
     <div class="fl c2l">电子标签码</div><div class="fi ph c2i">请输入电子标签码</div></div>
   <div class="fr"><div class="fl c1l">生产厂家</div><div class="fi ph" style="left:101px;width:804.500px">请输入生产厂家</div></div>
   <div class="fr" style="height:267px;margin-bottom:21.750px"><div class="fl c1l">功能介绍</div>
     <div class="qt"><span class="qf"><span class="qb"><svg viewBox="0 0 18 18"><path class="qs" d="M5,4H9.500A2.500,2.500,0,0,1,12,6.500v0A2.500,2.500,0,0,1,9.500,9H5V4Z"/><path class="qs" d="M5,9h5.500A2.500,2.500,0,0,1,13,11.500v0A2.500,2.500,0,0,1,10.500,14H5V9Z"/></svg></span><span class="qb"><svg viewBox="0 0 18 18"><line class="qs" x1="7" x2="13" y1="4" y2="4"/><line class="qs" x1="5" x2="11" y1="14" y2="14"/><line class="qs" x1="8" x2="10" y1="14" y2="4"/></svg></span><span class="qb"><svg viewBox="0 0 18 18"><path class="qs" d="M5,3V9a4.012,4.012,0,0,0,4,4H9a4.012,4.012,0,0,0,4-4V3"/><rect class="qfl" height="1" rx="0.500" ry="0.500" width="12" x="3" y="15"/></svg></span><span class="qb"><svg viewBox="0 0 18 18"><line class="qs qthin" x1="15.500" x2="2.500" y1="8.500" y2="9.500"/><path class="qfl" d="M9.007,8C6.542,7.791,6,7.519,6,6.500,6,5.792,7.283,5,9,5c1.571,0,2.765.679,2.969,1.309a1,1,0,0,0,1.900-.617C13.356,4.106,11.354,3,9,3,6.200,3,4,4.538,4,6.500a3.200,3.200,0,0,0,.5,1.843Z"/><path class="qfl" d="M8.984,10C11.457,10.208,12,10.479,12,11.500c0,0.708-1.283,1.500-3,1.500-1.571,0-2.765-.679-2.969-1.309a1,1,0,1,0-1.900.617C4.644,13.894,6.646,15,9,15c2.800,0,5-1.538,5-3.500a3.200,3.200,0,0,0-.5-1.843Z"/></svg></span></span><span class="qf"><span class="qb"><svg viewBox="0 0 18 18"><rect class="qfl qs" height="3" width="3" x="4" y="5"/><rect class="qfl qs" height="3" width="3" x="11" y="5"/><path class="qfl qs" d="M7,8c0,4.031-3,5-3,5"/><path class="qfl qs" d="M14,8c0,4.031-3,5-3,5"/></svg></span><span class="qb"><svg viewBox="0 0 18 18"><polyline class="qs" points="5 7 3 9 5 11"/><polyline class="qs" points="13 7 15 9 13 11"/><line class="qs" x1="10" x2="8" y1="5" y2="13"/></svg></span></span><span class="qf"><span class="qb"><svg viewBox="0 0 18 18"><line class="qs" x1="7" x2="15" y1="4" y2="4"/><line class="qs" x1="7" x2="15" y1="9" y2="9"/><line class="qs" x1="7" x2="15" y1="14" y2="14"/><line class="qs qthin" x1="2.500" x2="4.500" y1="5.500" y2="5.500"/><path class="qfl" d="M3.500,6A0.500,0.500,0,0,1,3,5.500V3.085l-0.276.138A0.500,0.500,0,0,1,2.053,3c-0.124-.247-0.023-0.324.224-0.447l1-.5A0.500,0.500,0,0,1,4,2.500v3A0.500,0.500,0,0,1,3.500,6Z"/><path class="qs qthin" d="M4.500,10.500h-2c0-.234,1.850-1.076,1.850-2.234A0.959,0.959,0,0,0,2.500,8.156"/><path class="qs qthin" d="M2.500,14.846a0.959,0.959,0,0,0,1.850-.109A0.700,0.700,0,0,0,3.750,14a0.688,0.688,0,0,0,.6-0.736,0.959,0.959,0,0,0-1.850-.109"/></svg></span><span class="qb"><svg viewBox="0 0 18 18"><line class="qs" x1="6" x2="15" y1="4" y2="4"/><line class="qs" x1="6" x2="15" y1="9" y2="9"/><line class="qs" x1="6" x2="15" y1="14" y2="14"/><line class="qs" x1="3" x2="3" y1="4" y2="4"/><line class="qs" x1="3" x2="3" y1="9" y2="9"/><line class="qs" x1="3" x2="3" y1="14" y2="14"/></svg></span></span><span class="qf"><span class="qb"><svg viewBox="0 0 18 18"><line class="qs" x1="3" x2="15" y1="14" y2="14"/><line class="qs" x1="3" x2="15" y1="4" y2="4"/><line class="qs" x1="9" x2="15" y1="9" y2="9"/><polyline class="qs" points="5 7 5 11 3 9 5 7"/></svg></span><span class="qb"><svg viewBox="0 0 18 18"><line class="qs" x1="3" x2="15" y1="14" y2="14"/><line class="qs" x1="3" x2="15" y1="4" y2="4"/><line class="qs" x1="9" x2="15" y1="9" y2="9"/><polyline class="qfl qs" points="3 7 3 11 5 9 3 7"/></svg></span></span><span class="qf"><span class="qpk">14px<svg viewBox="0 0 18 18"><polygon class="qs" points="7 11 9 13 11 11 7 11"/><polygon class="qs" points="7 7 9 5 11 7 7 7"/></svg></span></span><span class="qf"><span class="qpk">文本<svg viewBox="0 0 18 18"><polygon class="qs" points="7 11 9 13 11 11 7 11"/><polygon class="qs" points="7 7 9 5 11 7 7 7"/></svg></span></span><span class="qf"><span class="qb"><svg viewBox="0 0 18 18"><line class="qs" style="opacity:.4" x1="3" x2="15" y1="15" y2="15"/><polyline class="qs" points="5.500 11 9 3 12.500 11"/><line class="qs" x1="11.630" x2="6.380" y1="9" y2="9"/></svg></span><span class="qb"><svg viewBox="0 0 18 18"><g style="opacity:.75"><rect class="qfl" x="2" y="2" width="1" height="1"/><rect class="qfl" x="5" y="2" width="1" height="1"/><rect class="qfl" x="8" y="2" width="1" height="1"/><rect class="qfl" x="11" y="2" width="1" height="1"/><rect class="qfl" x="14" y="2" width="1" height="1"/><rect class="qfl" x="3" y="3" width="1" height="1"/><rect class="qfl" x="6" y="3" width="1" height="1"/><rect class="qfl" x="9" y="3" width="1" height="1"/><rect class="qfl" x="12" y="3" width="1" height="1"/><rect class="qfl" x="15" y="3" width="1" height="1"/><rect class="qfl" x="4" y="4" width="1" height="1"/><rect class="qfl" x="7" y="4" width="1" height="1"/><rect class="qfl" x="10" y="4" width="1" height="1"/><rect class="qfl" x="13" y="4" width="1" height="1"/><rect class="qfl" x="2" y="5" width="1" height="1"/><rect class="qfl" x="5" y="5" width="1" height="1"/><rect class="qfl" x="8" y="5" width="1" height="1"/><rect class="qfl" x="11" y="5" width="1" height="1"/><rect class="qfl" x="14" y="5" width="1" height="1"/><rect class="qfl" x="3" y="6" width="1" height="1"/><rect class="qfl" x="6" y="6" width="1" height="1"/><rect class="qfl" x="9" y="6" width="1" height="1"/><rect class="qfl" x="12" y="6" width="1" height="1"/><rect class="qfl" x="15" y="6" width="1" height="1"/><rect class="qfl" x="4" y="7" width="1" height="1"/><rect class="qfl" x="7" y="7" width="1" height="1"/><rect class="qfl" x="10" y="7" width="1" height="1"/><rect class="qfl" x="13" y="7" width="1" height="1"/><rect class="qfl" x="2" y="8" width="1" height="1"/><rect class="qfl" x="5" y="8" width="1" height="1"/><rect class="qfl" x="8" y="8" width="1" height="1"/><rect class="qfl" x="11" y="8" width="1" height="1"/><rect class="qfl" x="14" y="8" width="1" height="1"/><rect class="qfl" x="3" y="9" width="1" height="1"/><rect class="qfl" x="6" y="9" width="1" height="1"/><rect class="qfl" x="9" y="9" width="1" height="1"/><rect class="qfl" x="12" y="9" width="1" height="1"/><rect class="qfl" x="15" y="9" width="1" height="1"/><rect class="qfl" x="4" y="10" width="1" height="1"/><rect class="qfl" x="7" y="10" width="1" height="1"/><rect class="qfl" x="10" y="10" width="1" height="1"/><rect class="qfl" x="13" y="10" width="1" height="1"/><rect class="qfl" x="2" y="11" width="1" height="1"/><rect class="qfl" x="5" y="11" width="1" height="1"/><rect class="qfl" x="8" y="11" width="1" height="1"/><rect class="qfl" x="11" y="11" width="1" height="1"/><rect class="qfl" x="14" y="11" width="1" height="1"/><rect class="qfl" x="3" y="12" width="1" height="1"/><rect class="qfl" x="6" y="12" width="1" height="1"/><rect class="qfl" x="9" y="12" width="1" height="1"/><rect class="qfl" x="12" y="12" width="1" height="1"/><rect class="qfl" x="15" y="12" width="1" height="1"/><rect class="qfl" x="4" y="13" width="1" height="1"/><rect class="qfl" x="7" y="13" width="1" height="1"/><rect class="qfl" x="10" y="13" width="1" height="1"/><rect class="qfl" x="13" y="13" width="1" height="1"/><rect class="qfl" x="2" y="14" width="1" height="1"/><rect class="qfl" x="5" y="14" width="1" height="1"/><rect class="qfl" x="8" y="14" width="1" height="1"/><rect class="qfl" x="11" y="14" width="1" height="1"/><rect class="qfl" x="14" y="14" width="1" height="1"/><rect class="qfl" x="3" y="15" width="1" height="1"/><rect class="qfl" x="6" y="15" width="1" height="1"/><rect class="qfl" x="9" y="15" width="1" height="1"/><rect class="qfl" x="12" y="15" width="1" height="1"/><rect class="qfl" x="15" y="15" width="1" height="1"/></g><polyline points="5.500 13 9 5 12.500 13" fill="none" stroke="#fff" stroke-width="3.400" stroke-linejoin="round" stroke-linecap="round"/><polyline class="qs" points="5.500 13 9 5 12.500 13"/><line class="qs" x1="11.630" x2="6.380" y1="11" y2="11"/></svg></span></span><span class="qf"><span class="qb"><svg viewBox="0 0 18 18"><line class="qs" x1="3" x2="15" y1="9" y2="9"/><line class="qs" x1="3" x2="13" y1="14" y2="14"/><line class="qs" x1="3" x2="9" y1="4" y2="4"/></svg></span></span><span class="qf"><span class="qb"><svg viewBox="0 0 18 18"><line class="qs" x1="5" x2="13" y1="3" y2="3"/><line class="qs" x1="6" x2="9.350" y1="12" y2="3"/><line class="qs" x1="11" x2="15" y1="11" y2="15"/><line class="qs" x1="15" x2="11" y1="11" y2="15"/><rect class="qfl" height="1" rx="0.500" ry="0.500" width="7" x="2" y="14"/></svg></span></span><span class="qf"><span class="qb"><svg viewBox="0 0 18 18"><line class="qs" x1="7" x2="11" y1="7" y2="11"/><path class="qs" d="M8.900,4.577a3.476,3.476,0,0,1,.36,4.679A3.476,3.476,0,0,1,4.577,8.900C3.185,7.500,2.035,6.400,4.217,4.217S7.500,3.185,8.900,4.577Z"/><path class="qs" d="M13.423,9.100a3.476,3.476,0,0,0-4.679-.36,3.476,3.476,0,0,0,.36,4.679c1.392,1.392,2.500,2.542,4.679.36S14.815,10.500,13.423,9.100Z"/></svg></span><span class="qb"><svg viewBox="0 0 18 18"><rect class="qs" height="10" width="12" x="3" y="4"/><circle class="qfl" cx="6" cy="7" r="1"/><polyline class="qfl" points="5 12 5 11 7 9 8 10 11 7 13 9 13 12 5 12"/></svg></span><span class="qb"><svg viewBox="0 0 18 18"><rect class="qs" height="12" width="12" x="3" y="3"/><rect class="qfl" height="12" width="1" x="5" y="3"/><rect class="qfl" height="12" width="1" x="12" y="3"/><rect class="qfl" height="2" width="8" x="5" y="8"/><rect class="qfl" height="1" width="3" x="3" y="5"/><rect class="qfl" height="1" width="3" x="3" y="7"/><rect class="qfl" height="1" width="3" x="3" y="10"/><rect class="qfl" height="1" width="3" x="3" y="12"/><rect class="qfl" height="1" width="3" x="12" y="5"/><rect class="qfl" height="1" width="3" x="12" y="7"/><rect class="qfl" height="1" width="3" x="12" y="10"/><rect class="qfl" height="1" width="3" x="12" y="12"/></svg></span></span></div>
     <div class="qc"><span class="caret"></span>缠绕机</div></div>
   <div class="fr"><div class="fl req c1l">出厂日期</div><div class="fi" style="left:101px;width:220.6px;padding-left:30px"><svg class="abs" style="left:10.500px;top:11px;width:14px;height:14px" viewBox="0 0 14 14"><g fill="none" stroke="#c0c4cc" stroke-width="1"><rect x="1.500" y="2.500" width="11" height="10" rx=".5"/><path d="M1.500 5.500h11M4.300 1v2.600M9.700 1v2.600"/><path d="M3.800 7.800h1.400M6.300 7.800h1.400M8.800 7.800h1.400M3.800 10.200h1.400M6.300 10.200h1.400M8.800 10.200h1.400" stroke-width=".9"/></g></svg><span class="num">2025-05-01</span></div>
     <div class="fl req c2l">功能位置</div><div class="fi c2i">包装车间</div></div>
   <div class="fr"><div class="fl c1l">厂家联系人</div><div class="fi ph c1i">请输入设备厂家联系人</div>
     <div class="fl c2l">联系人电话</div><div class="fi ph c2i">请输入设备厂家联系人电话</div></div>
  </div>
 </div>
 <div class="sbar">
   <svg class="abs" style="left:2.700px;top:5.400px;width:10px;height:5.500px" viewBox="0 0 10 5.500"><path d="M0 5.500 5 0l5 5.500z" fill="#8b8b8b"/></svg>
   <div class="sthumb" style="top:18.200px;height:336.500px"></div>
   <svg class="abs" style="left:2.700px;bottom:6.400px;width:10px;height:5.500px" viewBox="0 0 10 5.500"><path d="M0 0h10L5 5.500z" fill="#8b8b8b"/></svg>
 </div>
 <div class="df"><span class="dbtn pri">确 定</span><span class="dbtn">取 消</span></div>
</div>
</div>
<div class="ime">
 <svg class="abs" style="left:5.600px;top:3.900px;width:18px;height:18px" viewBox="0 0 18 18"><rect x=".8" y=".8" width="16.400" height="16.400" rx="2.300" fill="#eef3ff" stroke="#3d7ef7" stroke-width="1.500"/><path d="M1 10.500 7.500 17H3a2 2 0 0 1-2-2z" fill="#3d7ef7"/><path d="M9 9 15.200 2.800" stroke="#3d7ef7" stroke-width="1.300"/><circle cx="8.800" cy="9.300" r="1.900" fill="#3d7ef7"/></svg>
 <span class="abs" style="left:36.300px;top:-.6px;line-height:27px;font-size:15.500px;font-weight:700;color:#3d7ef7">英</span>
 <svg class="abs" style="left:63.500px;top:6px;width:15px;height:15px" viewBox="0 0 15 15"><path d="M9.200.4c3.200 1.300 5.300 4.300 5.300 7.300 0 4-3.300 7-7.300 7-3 0-5.600-1.700-6.700-4.300 1.200.7 2.400 1 3.700 1 3.800 0 6.500-2.800 6.500-6.300 0-1.800-.5-3.300-1.500-4.700z" fill="#3d7ef7"/></svg>
 <svg class="abs" style="left:92.500px;top:6.500px;width:13px;height:15px" viewBox="0 0 13 15"><circle cx="3" cy="3" r="2" fill="#3d7ef7"/><path d="M7.600 6.600c1.800-.6 3.400.6 3.200 2.600-.2 1.900-1.300 3.400-2.900 4.500.8-1.200 1.100-2.200 1-3.300-1 0-2-.6-2.200-1.600-.2-1 .2-1.900.9-2.200z" fill="#3d7ef7"/></svg>
 <svg class="abs" style="left:116px;top:6.500px;width:16px;height:15px" viewBox="0 0 16 15"><circle cx="8" cy="4" r="3.300" fill="#8fb4fa"/><path d="M.6 14.500c.5-4 3.600-5.600 7.400-5.600s6.900 1.600 7.400 5.600z" fill="#8fb4fa"/></svg>
 <svg class="abs" style="left:145px;top:5.500px;width:16px;height:16px" viewBox="0 0 18 18"><g fill="none" stroke="#3d7ef7"><circle cx="9" cy="9" r="4.300" stroke-width="2.100"/><path d="M9 .8v3M9 14.200v3M.8 9h3M14.200 9h3M3.200 3.200l2.100 2.100M12.700 12.700l2.100 2.100M3.200 14.800l2.100-2.100M12.700 5.300l2.100-2.100" stroke-width="2.300"/></g></svg>
</div>

</div>
<div class="botline"></div>
</body></html>
